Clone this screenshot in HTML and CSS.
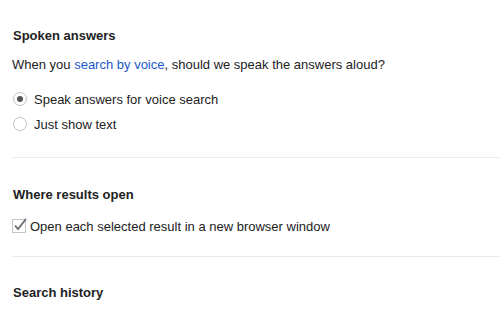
FILE: index.html
```html
<!DOCTYPE html>
<html lang="en">
<head>
    <meta charset="UTF-8">
    <title>Search Settings</title>
    <link rel="stylesheet" href="styles.css">
</head>
<body>
    <div class="settings">
        <div class="section first">
            <h2>Spoken answers</h2>
            <p class="desc">When you <a href="#">search by voice</a>, should we speak the answers aloud?</p>
            <div class="radio-row">
                <span class="radio checked"></span>
                <span>Speak answers for voice search</span>
            </div>
            <div class="radio-row">
                <span class="radio"></span>
                <span>Just show text</span>
            </div>
        </div>

        <div class="section second">
            <h2>Where results open</h2>
            <div class="check-row">
                <svg class="checkbox" width="16" height="16" viewBox="0 0 16 16">
                    <rect x="0.5" y="2.5" width="13" height="13" fill="#fff" stroke="#c4c4c4"/>
                    <path d="M3 8.5 L6 12 L14 2" fill="none" stroke="#6b6b6b" stroke-width="1.8"/>
                </svg>
                <span>Open each selected result in a new browser window</span>
            </div>
        </div>

        <div class="section last">
            <h2>Search history</h2>
        </div>
    </div>
</body>
</html>
```

FILE: styles.css
```css
* {
    margin: 0;
    padding: 0;
    box-sizing: border-box;
}

body {
    font-family: Arial, "Liberation Sans", sans-serif;
    font-size: 13px;
    color: #222;
    background: #fff;
}

.settings {
    padding-left: 12px;
}

.section {
    border-bottom: 1px solid #ebebeb;
}

.section.first {
    padding: 26px 0 21px;
}

.section.second {
    padding: 27px 0 20px;
}

.section.last {
    padding-top: 26px;
    border-bottom: none;
}

h2 {
    font-size: 13px;
    font-weight: bold;
    line-height: 20px;
    padding-left: 1px;
}

.desc {
    line-height: 20px;
    margin-top: 9px;
}

.desc a {
    color: #1a57c8;
    text-decoration: none;
}

.radio-row {
    display: flex;
    align-items: center;
    height: 24px;
    margin-top: 1px;
}

.radio-row:first-of-type {
    margin-top: 12px;
}

.radio {
    width: 14px;
    height: 14px;
    margin-left: 1px;
    margin-right: 7px;
    border: 1px solid #c2c2c2;
    border-radius: 50%;
    display: flex;
    align-items: center;
    justify-content: center;
}

.radio.checked::after {
    content: "";
    width: 6px;
    height: 6px;
    border-radius: 50%;
    background: #555;
}

.check-row {
    display: flex;
    align-items: center;
    height: 20px;
    margin-top: 11px;
}

.checkbox {
    margin-right: 2px;
    margin-top: -2px;
}
```
